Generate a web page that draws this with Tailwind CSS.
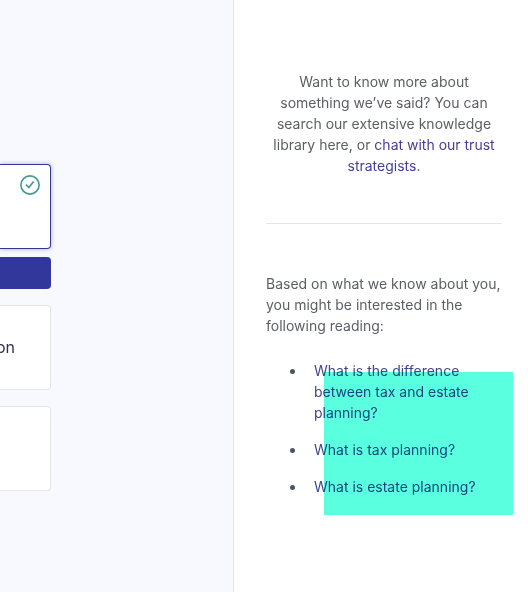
<!DOCTYPE html>
<html lang="en">
<head>
  <meta charset="UTF-8" />
  <meta name="viewport" content="width=device-width, initial-scale=1" />
  <title>Trust Strategy</title>
  <script src="https://cdn.jsdelivr.net/npm/@tailwindcss/browser@4"></script>
</head>
<body class="flex h-screen overflow-hidden bg-white font-['Inter',sans-serif] text-sm leading-[21px] font-normal text-[#5c5e64]">

  <!-- Options -->
  <main class="w-[234px] shrink-0 border-r border-[#e5e5e5] bg-[#f8f9fe] pt-[164px]">
    <div class="flex h-[85px] w-[51px] justify-end rounded-r border border-l-0 border-[#31379b] bg-white pt-2.5 pr-2.5 shadow-[0_0_4px_#31379b66]">
      <svg class="size-5" viewBox="0 0 20 20" fill="none" stroke="#44988f" stroke-width="1.6">
        <circle cx="10" cy="10" r="9.1" />
        <path d="M6 9.6l2.9 3L13.6 6.6" />
      </svg>
    </div>
    <div class="mt-2 h-8 w-[51px] rounded-r bg-[#31379b]"></div>
    <div class="mt-4 flex h-[85px] w-[51px] items-center justify-end rounded-r-sm border border-l-0 border-[#e5e5e5] bg-white pr-[35px] pb-0.5 text-base text-[#2f3152]">on</div>
    <div class="mt-4 h-[85px] w-[51px] rounded-r-sm border border-l-0 border-[#e5e5e5] bg-white"></div>
  </main>

  <!-- Further reading -->
  <aside class="relative flex-1 pt-[71px] pr-[26px] pl-8">
    <p class="text-center">Want to know more about<br />something we’ve said? You can<br />search our extensive knowledge<br />library here, or <a class="text-[#443f98]">chat with our trust<br />strategists</a>.</p>
    <hr class="mt-[47px] border-[#e5e5e5]" />
    <p class="mt-[49px] whitespace-nowrap">Based on what we know about you,<br />you might be interested in the<br />following reading:</p>
    <ul class="mt-6 space-y-4 text-[#41458f]">
      <li class="flex gap-[19px] pl-6">
        <span class="mt-[9px] size-[5px] shrink-0 rounded-full bg-[#4b5563]"></span>
        <a>What is the difference<br />between tax and estate<br />planning?</a>
      </li>
      <li class="flex gap-[19px] pl-6">
        <span class="mt-[9px] size-[5px] shrink-0 rounded-full bg-[#4b5563]"></span>
        <a>What is tax planning?</a>
      </li>
      <li class="flex gap-[19px] pl-6">
        <span class="mt-[9px] size-[5px] shrink-0 rounded-full bg-[#4b5563]"></span>
        <a>What is estate planning?</a>
      </li>
    </ul>
    <div class="absolute top-[372px] left-[90px] h-[143px] w-[189px] bg-[#5affdf] mix-blend-multiply"></div>
  </aside>
</body>
</html>
